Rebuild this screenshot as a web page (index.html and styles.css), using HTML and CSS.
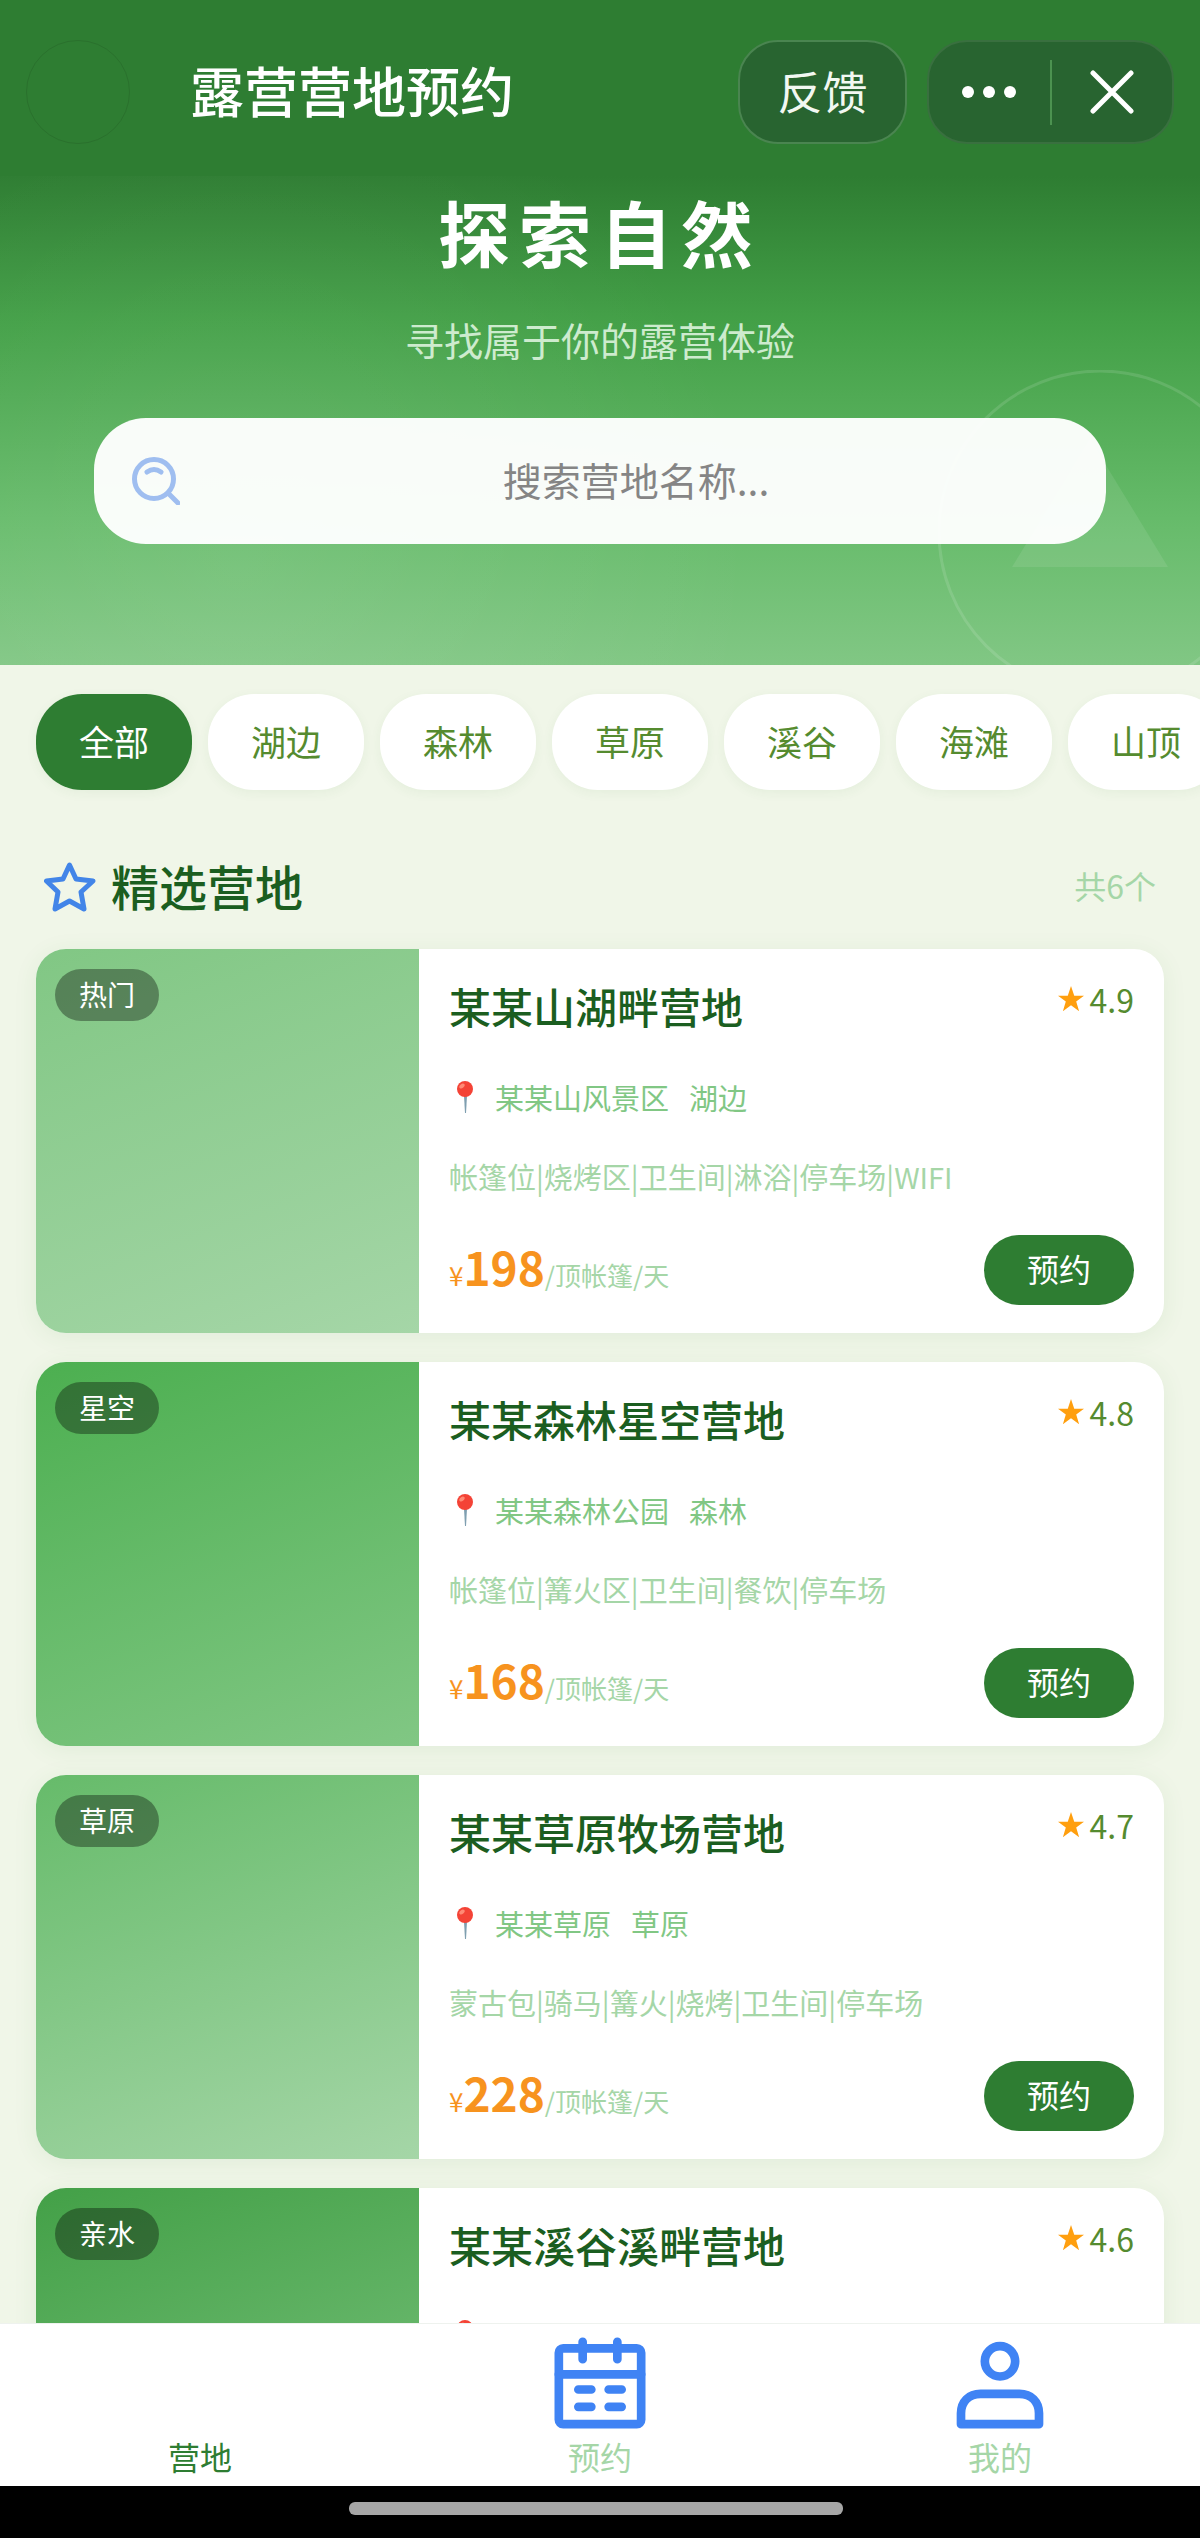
FILE: index.html
```html
<!DOCTYPE html>
<html lang="zh-CN">
<head>
<meta charset="UTF-8">
<meta name="viewport" content="width=device-width, initial-scale=1">
<title>露营营地预约</title>
<link rel="stylesheet" href="styles.css">
</head>
<body>
<svg class="sprite" aria-hidden="true">
  <symbol id="pin" viewBox="0 0 20 34">
    <path d="M9 16h3l-1 17h-1z" fill="#7f9fb0"/>
    <circle cx="10" cy="9" r="8" fill="#f44336"/>
    <ellipse cx="7" cy="6" rx="3" ry="2" fill="#ff8a75" transform="rotate(-40 7 6)"/>
  </symbol>
  <symbol id="star" viewBox="0 0 24 24">
    <path d="M12 0l3 8.900h9l-7.200 5.400 2.700 8.900L12 17.800l-7.500 5.400 2.700-8.900L0 8.900h9z" fill="#ff9f0f"/>
  </symbol>
</svg>
<div class="app">
  <header class="topbar">
    <span class="back"></span>
    <div class="topbar-title">露营营地预约</div>
    <button class="feedback" type="button">反馈</button>
    <div class="capsule">
      <button class="capsule-btn" type="button" aria-label="更多">
        <svg width="54" height="12" viewBox="0 0 54 12"><g fill="#fff"><circle cx="6" cy="6" r="6"/><circle cx="27" cy="6" r="6"/><circle cx="48" cy="6" r="6"/></g></svg>
      </button>
      <span class="capsule-line"></span>
      <button class="capsule-btn" type="button" aria-label="关闭">
        <svg width="44" height="44" viewBox="0 0 44 44"><path d="M3 3l38 38M41 3L3 41" stroke="#fff" stroke-width="5" stroke-linecap="round"/></svg>
      </button>
    </div>
  </header>

  <main class="content">
    <section class="hero">
      <svg class="hero-art" width="262" height="295" viewBox="0 0 262 295" aria-hidden="true">
        <circle cx="162" cy="162" r="161" fill="none" stroke="#fff" stroke-opacity=".12" stroke-width="3"/>
        <path d="M152 69l78 128H74z" fill="#fff" fill-opacity=".09"/>
      </svg>
      <h1>探索自然</h1>
      <p>寻找属于你的露营体验</p>
      <label class="search">
        <svg width="48" height="48" viewBox="0 0 48 48" fill="none" stroke="#9fbef0" stroke-width="5" stroke-linecap="round" aria-hidden="true"><circle cx="22" cy="22" r="19.500"/><path d="M15 15q7-5 14 0M36 36l10 10"/></svg>
        <input type="text" placeholder="搜索营地名称..." aria-label="搜索营地名称">
      </label>
    </section>

    <nav class="chips" aria-label="营地类型">
      <button class="chip active" type="button">全部</button>
      <button class="chip" type="button">湖边</button>
      <button class="chip" type="button">森林</button>
      <button class="chip" type="button">草原</button>
      <button class="chip" type="button">溪谷</button>
      <button class="chip" type="button">海滩</button>
      <button class="chip" type="button">山顶</button>
    </nav>

    <div class="section-head">
      <svg width="52" height="50" viewBox="0 0 52 50" fill="none" stroke="#4285e8" stroke-width="5" stroke-linejoin="round" aria-hidden="true"><path d="M25.500 3l6.500 14 17 2-12 11 3 17-14.500-8L11 47l3-17L2.500 19 19 17z"/></svg>
      <h2>精选营地</h2>
      <span class="count">共6个</span>
    </div>

    <div class="list">
      <article class="card">
        <div class="photo photo-lake"><span class="badge">热门</span></div>
        <div class="info">
          <div class="head"><h3>某某山湖畔营地</h3><span class="rating"><svg width="26" height="26"><use href="#star"/></svg>4.9</span></div>
          <div class="place"><svg width="20" height="34"><use href="#pin"/></svg><span>某某山风景区</span><span>湖边</span></div>
          <div class="facilities">帐篷位|烧烤区|卫生间|淋浴|停车场|WIFI</div>
          <div class="foot"><div class="price">¥<strong>198</strong><span>/顶帐篷/天</span></div><button class="book" type="button">预约</button></div>
        </div>
      </article>
      <article class="card">
        <div class="photo photo-forest"><span class="badge">星空</span></div>
        <div class="info">
          <div class="head"><h3>某某森林星空营地</h3><span class="rating"><svg width="26" height="26"><use href="#star"/></svg>4.8</span></div>
          <div class="place"><svg width="20" height="34"><use href="#pin"/></svg><span>某某森林公园</span><span>森林</span></div>
          <div class="facilities">帐篷位|篝火区|卫生间|餐饮|停车场</div>
          <div class="foot"><div class="price">¥<strong>168</strong><span>/顶帐篷/天</span></div><button class="book" type="button">预约</button></div>
        </div>
      </article>
      <article class="card">
        <div class="photo photo-grass"><span class="badge">草原</span></div>
        <div class="info">
          <div class="head"><h3>某某草原牧场营地</h3><span class="rating"><svg width="26" height="26"><use href="#star"/></svg>4.7</span></div>
          <div class="place"><svg width="20" height="34"><use href="#pin"/></svg><span>某某草原</span><span>草原</span></div>
          <div class="facilities">蒙古包|骑马|篝火|烧烤|卫生间|停车场</div>
          <div class="foot"><div class="price">¥<strong>228</strong><span>/顶帐篷/天</span></div><button class="book" type="button">预约</button></div>
        </div>
      </article>
      <article class="card">
        <div class="photo photo-stream"><span class="badge">亲水</span></div>
        <div class="info">
          <div class="head"><h3>某某溪谷溪畔营地</h3><span class="rating"><svg width="26" height="26"><use href="#star"/></svg>4.6</span></div>
          <div class="place"><svg width="20" height="34"><use href="#pin"/></svg><span>某某某谷</span><span>溪谷</span></div>
        </div>
      </article>
    </div>
  </main>

  <nav class="tabbar" aria-label="主导航">
    <a class="tab current" href="#camp"><span class="tab-icon"></span>营地</a>
    <a class="tab" href="#booking">
      <svg class="tab-icon" viewBox="0 0 24 24" aria-hidden="true"><rect x="2.500" y="4" width="19" height="17.500" rx="1"/><path d="M2.500 10h19M8 2.500v4M16 2.500v4M7 13.500h3M14 13.500h3M7 17.500h3M14 17.500h3"/></svg>
      预约</a>
    <a class="tab" href="#mine">
      <svg class="tab-icon" viewBox="0 0 24 24" aria-hidden="true"><circle cx="12" cy="7" r="3.500"/><path d="M3 21.500V19c0-2.700 1.800-4.500 4.500-4.500h9c2.700 0 4.500 1.800 4.500 4.500v2.500z"/></svg>
      我的</a>
  </nav>
  <div class="home-area"><span class="home-bar"></span></div>
</div>
</body>
</html>
```
FILE: styles.css
```css
* { box-sizing: border-box; }

body {
  margin: 0;
  background: #f0f6e8;
  font-family: "Noto Sans CJK SC", "Noto Sans", sans-serif;
}

h1, h2, h3, p { margin: 0; }

button {
  margin: 0;
  padding: 0 0 4px;
  border: 0;
  font-family: inherit;
  cursor: pointer;
}

svg { display: block; flex: none; }

.sprite { position: absolute; width: 0; height: 0; }

.app {
  display: flex;
  flex-direction: column;
  height: 100vh;
}

/* top bar */
.topbar {
  flex: none;
  display: flex;
  align-items: center;
  padding: 40px 26px 32px;
  background: #2e7d32;
}

.back {
  width: 104px;
  height: 104px;
  border: 1px solid #2a712d;
  border-radius: 50%;
}

.topbar-title {
  flex: 1;
  margin-left: 60px;
  padding-bottom: 4px;
  color: #fff;
  font-size: 54px;
  font-weight: 500;
  line-height: 80px;
}

.feedback {
  width: 169px;
  height: 104px;
  border: 2px solid #4a8550;
  border-radius: 40px;
  background: #286430;
  color: #f2f8f2;
  font-size: 45px;
}

.capsule {
  display: flex;
  align-items: center;
  width: 247px;
  height: 104px;
  margin-left: 20px;
  border: 2px solid #39703f;
  border-radius: 40px;
  background: #286430;
}

.capsule-btn {
  flex: 1;
  display: flex;
  align-items: center;
  justify-content: center;
  height: 100%;
  padding: 0;
  background: none;
}

.capsule-line {
  width: 2px;
  height: 65px;
  background: #4c9250;
}

/* scrolling page */
.content {
  flex: 1;
  min-height: 0;
  overflow: hidden auto;
  scrollbar-width: none;
}

.hero {
  position: relative;
  display: flex;
  flex-direction: column;
  align-items: center;
  padding: 5px 94px 121px;
  background:
    radial-gradient(circle at 20% 80%, rgba(255, 255, 255, .08), transparent 50%),
    linear-gradient(#2e7d32, #43a047 30%, #66bb6a 70%, #81c784);
  color: #fff;
  text-align: center;
}

.hero-art {
  position: absolute;
  right: 0;
  bottom: 0;
}

.hero h1 {
  font-size: 72px;
  font-weight: 700;
  line-height: 100px;
  letter-spacing: 9px;
}

.hero p {
  margin-top: 28px;
  color: #cdebce;
  font-size: 39px;
  line-height: 60px;
}

.search {
  position: relative;
  display: flex;
  align-items: center;
  gap: 24px;
  width: 100%;
  height: 126px;
  margin-top: 49px;
  padding: 0 38px;
  border-radius: 52px;
  background: rgba(255, 255, 255, .96);
}

.search input {
  flex: 1;
  min-width: 0;
  height: 100%;
  padding: 0 0 4px;
  border: 0;
  outline: 0;
  background: none;
  color: #333;
  font-family: inherit;
  font-size: 39px;
  text-align: center;
}

.search input::placeholder { color: #858585; opacity: 1; }

.chips {
  display: flex;
  gap: 16px;
  padding: 29px 36px;
  overflow: hidden;
}

.chip {
  flex: none;
  height: 96px;
  padding: 0 43px 4px;
  border-radius: 46px;
  background: #fff;
  box-shadow: 0 3px 12px rgba(46, 125, 50, .06);
  color: #558b2f;
  font-size: 35px;
}

.chip.active { background: #2e7d32; color: #fff; }

.section-head {
  display: flex;
  align-items: center;
  padding: 37px 44px 31px;
}

.section-head h2 {
  flex: 1;
  margin-left: 15px;
  padding-bottom: 4px;
  color: #1b5e20;
  font-size: 48px;
  font-weight: 500;
  line-height: 58px;
}

.count { padding-bottom: 4px; color: #a5d6a7; font-size: 32px; line-height: 46px; }

/* camp cards */
.list {
  display: flex;
  flex-direction: column;
  gap: 29px;
  padding: 0 36px 36px;
}

.card {
  display: flex;
  min-height: 384px;
  overflow: hidden;
  border-radius: 30px;
  background: #fff;
  box-shadow: 0 4px 24px rgba(46, 125, 50, .08);
}

.photo { flex: none; width: 383px; padding: 20px 19px; }
.photo-lake { background: linear-gradient(160deg, #81c784, #a5d6a7); }
.photo-forest { background: linear-gradient(160deg, #4caf50, #81c784); }
.photo-grass { background: linear-gradient(160deg, #66bb6a, #a5d6a7); }
.photo-stream { background: linear-gradient(160deg, #43a047, #81c784); }

.badge {
  display: inline-block;
  padding: 0 24px 2px;
  border-radius: 26px;
  background: rgba(0, 0, 0, .35);
  color: #fff;
  font-size: 28px;
  line-height: 50px;
}

.info {
  flex: 1;
  display: flex;
  flex-direction: column;
  gap: 39px;
  padding: 28px 30px;
}

.head {
  display: flex;
  align-items: flex-start;
  justify-content: space-between;
}

.head h3 {
  padding-bottom: 4px;
  color: #1b5e20;
  font-size: 42px;
  font-weight: 500;
  line-height: 57px;
}

.rating {
  display: flex;
  align-items: center;
  gap: 6px;
  color: #558b2f;
  font-size: 32px;
  line-height: 44px;
}

.place {
  display: flex;
  align-items: center;
  gap: 20px;
  padding-left: 6px;
  color: #81c784;
  font-size: 29px;
  line-height: 40px;
}

.facilities { color: #a5d6a7; font-size: 29px; line-height: 40px; }

.foot {
  display: flex;
  align-items: center;
  justify-content: space-between;
}

.price {
  display: flex;
  align-items: baseline;
  color: #f7931e;
  font-size: 26px;
  line-height: 60px;
}

.price strong { font-size: 46px; font-weight: 700; }
.price span { color: #a5d6a7; }

.book {
  width: 150px;
  height: 70px;
  border-radius: 35px;
  background: #2e7d32;
  color: #fff;
  font-size: 32px;
}

/* bottom bar */
.tabbar {
  flex: none;
  display: flex;
  border-top: 1px solid #eef2ee;
  background: #fff;
}

.tab {
  flex: 1;
  display: flex;
  flex-direction: column;
  align-items: center;
  gap: 1px;
  padding: 7px 0 10px;
  color: #a5d6a7;
  font-size: 32px;
  line-height: 40px;
  text-decoration: none;
}

.tab.current { color: #2e7d32; }

.tab-icon {
  width: 104px;
  height: 104px;
  fill: none;
  stroke: #3f83f4;
  stroke-width: 2;
  stroke-linecap: round;
  stroke-linejoin: round;
}

.home-area {
  flex: none;
  display: flex;
  justify-content: center;
  padding: 16px 8px 23px 0;
  background: #000;
}

.home-bar {
  width: 494px;
  height: 13px;
  border-radius: 6px;
  background: #a6a6a6;
}
```
